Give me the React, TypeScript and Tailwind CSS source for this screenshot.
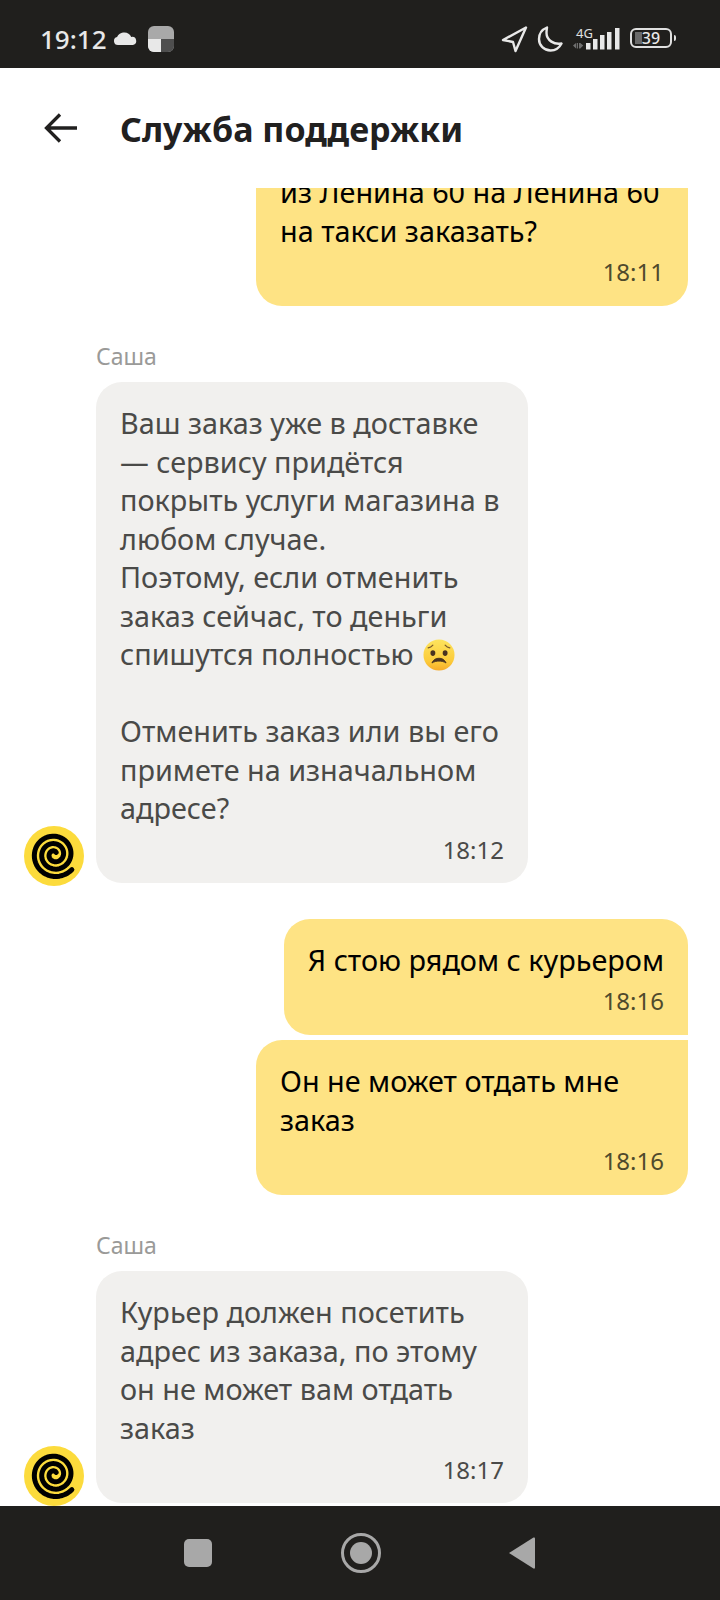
import React from 'react';

// avatar logo: spiral running from the tail at lower right inward, clockwise
const spiralPath = () => {
  const cx = 30.5;
  const cy = 28.5;
  const points: string[] = [];
  for (let t = 0; t <= 2.75; t += 0.02) {
    const angle = ((41 + 360 * t) * Math.PI) / 180;
    const r = 23 - 7.4 * t;
    points.push(`${(cx + r * Math.cos(angle)).toFixed(2)} ${(cy + r * Math.sin(angle)).toFixed(2)}`);
  }
  return `M${points.join('L')}`;
};

const Spiral = () => (
  <div className="h-[60px] w-[60px] shrink-0 rounded-full bg-[#fcdb3c]">
    <svg width="60" height="60" viewBox="0 0 60 60" fill="none">
      <path d={spiralPath()} stroke="#000" strokeWidth="5" strokeLinecap="round" strokeLinejoin="round" />
    </svg>
  </div>
);

const SadEmoji = () => (
  <svg width="32" height="32" viewBox="0 0 34 34" className="ml-[2px] inline-block align-[-6px]">
    <defs>
      <linearGradient id="face" x1="0" y1="0" x2="0" y2="1">
        <stop offset="0%" stopColor="#fde45e" />
        <stop offset="70%" stopColor="#fccb3a" />
        <stop offset="100%" stopColor="#f6ac2a" />
      </linearGradient>
    </defs>
    <circle cx="17" cy="17" r="16.5" fill="url(#face)" />
    <ellipse cx="10.500" cy="15" rx="2.600" ry="3" fill="#4a3320" />
    <ellipse cx="23.500" cy="15" rx="2.600" ry="3" fill="#4a3320" />
    <path d="M5.500 9.500c1.800-.4 3.600-1.400 5-3M28.500 9.500c-1.800-.4-3.600-1.400-5-3" stroke="#7a5a2c" strokeWidth="1.300" fill="none" strokeLinecap="round" />
    <path d="M9.500 25.500c1.600-3.800 4.500-5 7.500-5s5.900 1.200 7.500 5c-2.200-1.500-4.900-2-7.500-2s-5.300.5-7.500 2z" fill="#4a3320" stroke="#4a3320" strokeWidth="1" strokeLinejoin="round" />
  </svg>
);

const Outgoing = ({ text, time, className = '' }: { text: React.ReactNode; time: string; className?: string }) => (
  <div className={`ml-auto bg-[#fee384] px-6 pt-[22px] pb-[17px] text-[28.8px] leading-[38.5px] text-black ${className}`}>
    <p>{text}</p>
    <p className="mt-[5px] text-right text-[24px] leading-[34px] text-[#4f4a2c]">{time}</p>
  </div>
);

const Incoming = ({ text, time, name }: { text: React.ReactNode; time: string; name: string }) => (
  <div className="flex items-end">
    <div className="mr-3 ml-6 -mb-[3px]">
      <Spiral />
    </div>
    <div className="w-[432px]">
      <p className="mb-[13px] text-[23px] leading-[26px] text-[#9a9a98]">{name}</p>
      <div className="rounded-[26px] bg-[#f1f0ee] px-6 pt-[22px] pb-[16px] text-[28.8px] leading-[38.5px] text-[#4a4a48]">
        {text}
        <p className="mt-[5px] text-right text-[24px] leading-[34px]">{time}</p>
      </div>
    </div>
  </div>
);

const StatusBar = () => (
  <div className="flex h-[68px] shrink-0 items-center justify-between bg-[#201f1d] pt-[10px] pl-10 pr-[44px] text-[#e8e8e8]">
    <div className="flex items-center">
      <span className="text-[26px] font-medium leading-none">19:12</span>
      <svg width="24" height="14" viewBox="0 0 24 14" className="ml-[6px]" fill="#e8e8e8">
        <path d="M5 13a4 4 0 0 1-.9-7.900C5 2.500 8 .5 11.500.5c3 0 5.500 1.700 6.700 4.500A4 4 0 0 1 20 13z" />
      </svg>
      <div className="ml-[11px] grid h-[26px] w-[26px] grid-cols-2 grid-rows-2 overflow-hidden rounded-[6px] bg-[#a9a9a9]">
        <div className="col-span-2" />
        <div className="bg-[#e8e8e8]" />
        <div className="bg-[#4e4e4e]" />
      </div>
    </div>
    <div className="flex items-center">
      <svg width="28" height="28" viewBox="0 0 28 28" fill="none" stroke="#e8e8e8" strokeWidth="2.400" strokeLinejoin="round">
        <path d="M26 2.500 3 15l10 2 2.500 9z" />
      </svg>
      <svg width="26" height="28" viewBox="0 0 26 28" fill="none" stroke="#e8e8e8" strokeWidth="2.400" strokeLinejoin="round" className="ml-[9px]">
        <path d="M10 2.500C5 4.500 2 9 2 14c0 6.500 5 11.500 11.500 11.500 5 0 9-3 11-7-7 1.500-15-3-15-10.500 0-2 .3-4 .5-5.500z" />
      </svg>
      <div className="relative ml-[10px] h-[30px] w-[47px]">
        <span className="absolute left-[3px] top-[1.5px] text-[13px] leading-[14px] text-[#e0e0e0]">4G</span>
        <svg width="47" height="30" viewBox="0 0 47 30" className="absolute inset-0" fill="#e8e8e8">
          <path d="M0 21.500 3 19v5.500zM3.700 19h1.300v5.500H3.700zM6 19h1.300v5.500H6zM7.300 19l3 2.500-3 3z" fill="#6f6f6f" />
          <rect x="13" y="19" width="4.500" height="6.500" />
          <rect x="20" y="15" width="4.500" height="10.500" />
          <rect x="27" y="11" width="4.500" height="14.500" />
          <rect x="34" y="8" width="4.500" height="17.500" />
          <rect x="42" y="4" width="4.500" height="21.500" />
        </svg>
      </div>
      <div className="-mt-[2px] ml-[10px] flex items-center">
        <div className="relative flex h-[20px] w-[42px] items-center justify-center overflow-hidden rounded-[6px] border-2 border-[#e0e0e0]">
          <div className="absolute inset-y-[2px] left-[3px] w-[7px] bg-[#6a6a6a]" />
          <span className="relative text-[16px] font-medium leading-none text-[#e8e8e8]">39</span>
        </div>
        <div className="ml-[2px] h-[6px] w-[2px] rounded-r-sm bg-[#e0e0e0]" />
      </div>
    </div>
  </div>
);

const NavBar = () => (
  <div className="flex h-[94px] shrink-0 items-center bg-[#201f1d] pl-[184px]">
    <div className="h-[28px] w-[28px] rounded-[5px] bg-[#a8a8a8]" />
    <div className="ml-[129px] flex h-[40px] w-[40px] items-center justify-center rounded-full border-[3px] border-[#a8a8a8]">
      <div className="h-[22px] w-[22px] rounded-full bg-[#a8a8a8]" />
    </div>
    <svg width="28" height="34" viewBox="0 0 28 34" className="ml-[127px]" fill="#a8a8a8">
      <path d="M1 17 25.500 1.500q1.500-.5 1.500 1v29q0 1.500-1.500 1z" />
    </svg>
  </div>
);

export default function App() {
  return (
    <div className="flex h-[1600px] w-[720px] flex-col overflow-hidden bg-white font-['Noto_Sans',sans-serif]">
      <StatusBar />

      <div className="flex h-[120px] shrink-0 items-center pl-[43px]">
        <svg width="34" height="32" viewBox="0 0 34 32" fill="none" stroke="#21201f" strokeWidth="3.300">
          <path d="M34 16H3.500M17 2.500 3.500 16 17 29.500" />
        </svg>
        <h1 className="ml-[43px] pt-[2px] text-[34px] font-bold leading-none text-[#21201f]">Служба поддержки</h1>
      </div>

      <div className="min-h-0 flex-1 overflow-hidden">
        <div className="-mt-[37px] pr-8">
          <Outgoing
            className="w-[432px] rounded-[26px]"
            text={<>из Ленина 60 на Ленина 60<br />на такси заказать?</>}
            time="18:11"
          />
          <div className="-mr-8 mt-[37px]">
            <Incoming
              name="Саша"
              time="18:12"
              text={
                <p>
                  Ваш заказ уже в доставке<br />
                  — сервису придётся<br />
                  покрыть услуги магазина в<br />
                  любом случае.<br />
                  Поэтому, если отменить<br />
                  заказ сейчас, то деньги<br />
                  спишутся полностью <SadEmoji /><br />
                  <br />
                  Отменить заказ или вы его<br />
                  примете на изначальном<br />
                  адресе?
                </p>
              }
            />
          </div>
          <Outgoing
            className="mt-[36px] w-fit rounded-l-[26px] rounded-tr-[26px]"
            text="Я стою рядом с курьером"
            time="18:16"
          />
          <Outgoing
            className="mt-[5px] w-[432px] rounded-l-[26px] rounded-br-[26px]"
            text={<>Он не может отдать мне<br />заказ</>}
            time="18:16"
          />
          <div className="-mr-8 mt-[37px]">
            <Incoming
              name="Саша"
              time="18:17"
              text={
                <p className="pb-px">
                  Курьер должен посетить<br />
                  адрес из заказа, по этому<br />
                  он не может вам отдать<br />
                  заказ
                </p>
              }
            />
          </div>
        </div>
      </div>

      <NavBar />
    </div>
  );
}
